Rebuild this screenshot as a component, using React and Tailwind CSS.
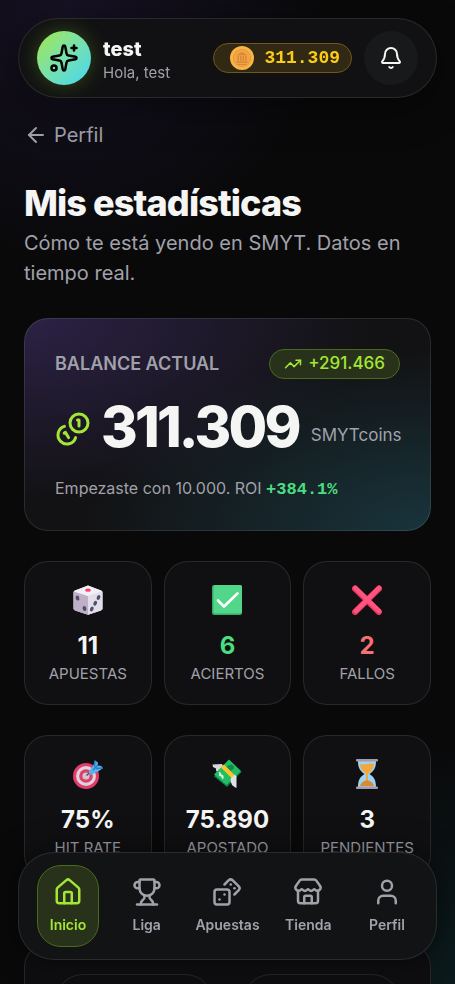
import { ArrowLeft, Bell, Dices, House, Sparkles, Store, TrendingUp, Trophy, User } from 'lucide-react'
import clsx from 'clsx'

const NAV_ITEMS = [
  { id: 'inicio', label: 'Inicio', icon: House, active: true },
  { id: 'liga', label: 'Liga', icon: Trophy },
  { id: 'apuestas', label: 'Apuestas', icon: Dices },
  { id: 'tienda', label: 'Tienda', icon: Store },
  { id: 'perfil', label: 'Perfil', icon: User },
]

const RESULT_STATS = [
  { label: 'Apuestas', value: '11', icon: DieEmoji },
  { label: 'Aciertos', value: '6', icon: CheckEmoji, color: 'text-[#4ade80]' },
  { label: 'Fallos', value: '2', icon: CrossEmoji, color: 'text-[#f87171]' },
]

const VOLUME_STATS = [
  { label: 'Hit rate', value: '75%', icon: TargetEmoji },
  { label: 'Apostado', value: '75.890', icon: MoneyEmoji },
  { label: 'Pendientes', value: '3', icon: HourglassEmoji },
]

export default function App() {
  return (
    <div className="relative h-screen overflow-hidden bg-[#09090a] font-['Inter',sans-serif] text-[#f5f5f4]">
      {/* Ambient glow */}
      <div className="pointer-events-none absolute inset-0 bg-[radial-gradient(circle_at_15%_0%,rgba(90,60,170,0.16),transparent_260px),radial-gradient(circle_at_108%_100%,rgba(20,110,115,0.2),transparent_240px)]" />

      <div className="relative flex h-full flex-col overflow-y-auto px-6 pt-[18px] [scrollbar-width:none]">
        <Header />
        <main className="flex flex-col gap-[30px] pt-[23px] pb-40">
          <div>
            <a href="#perfil" className="inline-flex items-center gap-[6px] text-xl leading-7 text-[#a1a1aa]">
              <ArrowLeft size={24} strokeWidth={2} />
              Perfil
            </a>
            <h1 className="mt-[30px] text-4xl leading-10 font-extrabold tracking-tight">Mis estadísticas</h1>
            <p className="mt-[5px] text-xl leading-[30px] text-[#a1a1aa]">
              Cómo te está yendo en SMYT. Datos en tiempo real.
            </p>
          </div>
          <BalanceCard />
          <StatRow stats={RESULT_STATS} />
          <StatRow stats={VOLUME_STATS} />
          <section className="mt-[34px] grid grid-cols-2 gap-[30px] rounded-[24px] border border-white/10 bg-[#0e0e10] p-[30px]">
            <div className="h-36 rounded-[28px] border border-white/10" />
            <div className="h-36 rounded-[28px] border border-white/10" />
          </section>
        </main>
      </div>

      <BottomNav />
    </div>
  )
}

function Header() {
  return (
    <header className="sticky top-0 z-20 -mx-[6px] flex h-20 shrink-0 items-center gap-3 rounded-[40px] border border-white/10 bg-[#111113] px-[18px] shadow-[0_10px_40px_rgba(0,0,0,0.4)]">
      <div className="flex size-[54px] shrink-0 items-center justify-center rounded-full bg-linear-to-br from-[#a3e635] to-[#3fd6f5] text-black shadow-[0_0_20px_rgba(132,204,22,0.3)]">
        <Sparkles size={30} strokeWidth={2} />
      </div>
      <div className="min-w-0 flex-1 pt-[6px]">
        <p className="text-xl leading-6 font-extrabold">test</p>
        <p className="text-[15px] leading-6 text-[#a1a1aa]">Hola, test</p>
      </div>
      <div className="flex h-[30px] items-center gap-[10px] rounded-full border border-[#725818] bg-[#312914] pr-[11px] pl-4 text-[#facc15]">
        <CoinEmoji />
        <span className="font-['Liberation_Mono',monospace] text-lg font-bold">311.309</span>
      </div>
      <button type="button" aria-label="Notificaciones" className="flex size-[54px] items-center justify-center rounded-full bg-[#18191b]">
        <Bell size={24} strokeWidth={2} />
      </button>
    </header>
  )
}

function BalanceCard() {
  return (
    <section className="rounded-[24px] border border-white/10 bg-[#121214] bg-[radial-gradient(ellipse_at_0%_0%,rgba(76,52,130,0.45),transparent_60%),radial-gradient(ellipse_at_100%_100%,rgba(34,100,115,0.42),transparent_60%)] bg-origin-border p-[30px]">
      <div className="flex items-center justify-between">
        <h2 className="text-lg leading-7 font-semibold text-[#a1a1aa] uppercase">Balance actual</h2>
        <span className="flex h-[30px] items-center gap-[6px] rounded-full border border-[#4a6a1d] bg-[#28321a] px-[14px] text-[17px] font-medium text-[#a3e635]">
          <TrendingUp size={18} strokeWidth={2} />
          +291.466
        </span>
      </div>
      <div className="mt-[18px] flex items-center gap-[10px]">
        <CoinsIcon />
        <p className="flex items-end gap-3">
          <span className="text-[56px] leading-[60px] font-extrabold tracking-tighter">311.309</span>
          <span className="pb-2 text-[17px] leading-7 text-[#a1a1aa]">SMYTcoins</span>
        </p>
      </div>
      <p className="mt-[19px] text-base leading-6 text-[#a1a1aa]">
        Empezaste con 10.000. ROI{' '}
        <strong className="font-['Liberation_Mono',monospace] text-[17px] leading-none text-[#4ade80]">+384.1%</strong>
      </p>
    </section>
  )
}

function StatRow({ stats }) {
  return (
    <section className="grid grid-cols-3 gap-3">
      {stats.map(({ label, value, icon: Icon, color }) => (
        <div key={label} className="flex h-36 flex-col items-center rounded-[24px] border border-white/10 bg-[#101012] pt-[23px]">
          <Icon />
          <p className={clsx('mt-[15px] text-2xl leading-8 font-bold', color)}>{value}</p>
          <p className="text-[15px] leading-6 text-[#a1a1aa] uppercase">{label}</p>
        </div>
      ))}
    </section>
  )
}

function BottomNav() {
  return (
    <nav className="absolute inset-x-[18px] bottom-6 z-20 flex h-[108px] justify-between rounded-[36px] border border-white/10 bg-[#121315] px-[18px] py-3 shadow-[0_0_30px_rgba(0,0,0,0.5)]">
      {NAV_ITEMS.map(({ id, label, icon: Icon, active }) => (
        <a
          key={id}
          href={`#${id}`}
          className={clsx(
            'flex min-w-[62px] flex-col items-center gap-[6px] rounded-[24px] border pt-[11px] text-sm leading-6 font-semibold',
            active ? 'border-[#4a6a1d] bg-[#28321a] text-[#a3e635]' : 'border-transparent text-[#a1a1aa]'
          )}
        >
          <Icon size={30} strokeWidth={2} className="shrink-0" />
          {label}
        </a>
      ))}
    </nav>
  )
}

function CoinsIcon() {
  return (
    <svg
      width="36"
      height="36"
      viewBox="0 0 24 24"
      fill="none"
      stroke="currentColor"
      strokeWidth="2"
      strokeLinecap="round"
      strokeLinejoin="round"
      className="mt-1 shrink-0 text-[#a3e635]"
      aria-hidden="true"
    >
      <path d="M13.744 17.736a6 6 0 1 1-7.48-7.48" />
      <path d="M15 6h1v4" />
      <path d="m6.134 14.768.866-.5 2 3.464" />
      <circle cx="16" cy="8" r="6" />
    </svg>
  )
}

/* Colour icons */

function CoinEmoji() {
  return (
    <svg width="24" height="24" viewBox="0 0 24 24" aria-hidden="true">
      <circle cx="12" cy="12" r="12" fill="#f9b546" />
      <circle cx="12" cy="12" r="9" fill="#e08e3a" />
      <circle cx="12" cy="12" r="8.4" fill="#f2a544" />
      <path d="M6.5 9.2 12 6l5.5 3.2ZM7.5 10H9v5H7.5zM10 10h1.4v5H10zM12.600 10H14v5h-1.400zM15 10h1.500v5H15z" fill="#d98736" />
      <path d="M6.500 15.500h11v1.500h-11zM8 18h8v1H8z" fill="#d98736" />
    </svg>
  )
}

function DieEmoji() {
  return (
    <svg width="30" height="30" viewBox="0 0 30 30" aria-hidden="true">
      <path d="M15 .5 28.500 5.500 29.500 7v17L28 25.500 15 29.800 2 25.500.5 24V7L1.500 5.500Z" fill="#e6e0ec" />
      <path d="M.5 6.500 15 11v18.800L2 25.500.5 24Z" fill="#bfb0c8" />
      <path d="M29.500 6.500 15 11v18.800L28 25.500l1.500-1.500Z" fill="#e3dde9" />
      <path d="M15 .5 29 6.200 15 11 1 6.200Z" fill="#f3eff6" />
      <ellipse cx="15" cy="5.200" rx="2.900" ry="1.600" fill="#f8406a" />
      <g fill="#49506b">
        <ellipse cx="4.500" cy="13" rx="1.800" ry="2.600" transform="rotate(-14 4.500 13)" />
        <ellipse cx="11.500" cy="23.500" rx="1.800" ry="2.600" transform="rotate(-14 11.500 23.500)" />
        <ellipse cx="25.500" cy="12.500" rx="1.700" ry="2.500" transform="rotate(25 25.500 12.500)" />
        <ellipse cx="22.200" cy="18.300" rx="1.700" ry="2.500" transform="rotate(25 22.200 18.300)" />
        <ellipse cx="18.800" cy="24" rx="1.700" ry="2.500" transform="rotate(25 18.800 24)" />
      </g>
    </svg>
  )
}

function CheckEmoji() {
  return (
    <svg width="30" height="30" viewBox="0 0 30 30" aria-hidden="true">
      <rect width="30" height="30" rx="2" fill="#3aa86b" />
      <rect x="1.500" width="28.500" height="28.500" rx="2" fill="#52d689" />
      <path d="m6 15.500 6 6L25.500 8.500" fill="none" stroke="#fff" strokeWidth="2.600" strokeLinecap="round" strokeLinejoin="round" />
    </svg>
  )
}

function CrossEmoji() {
  return (
    <svg width="30" height="30" viewBox="0 0 30 30" strokeLinecap="round" aria-hidden="true">
      <path d="m3 3.500 24 23.500M27 3.500 3 27" stroke="#e8395f" strokeWidth="6" />
      <path d="m3.500 3 23.500 23M27 3 4 26" stroke="#ff5480" strokeWidth="4.500" />
    </svg>
  )
}

function TargetEmoji() {
  return (
    <svg width="30" height="30" viewBox="0 0 30 30" aria-hidden="true">
      <circle cx="13" cy="17" r="13" fill="#e23c68" />
      <circle cx="13" cy="17" r="10" fill="#dcd3df" />
      <circle cx="13" cy="17" r="6.800" fill="#e23c68" />
      <circle cx="13" cy="17" r="3.600" fill="#cfc6d4" />
      <path d="m13.500 16.500 5-4.500" stroke="#5b5866" strokeWidth="1.600" />
      <path d="m15.500 13 5-7L22 1.500l3 2-.5 3 4 .5 1 2.500-4.500 3-7.500 3.500Z" fill="#55b4ee" />
      <path d="m20 11 5-5M22 1.500 21.500 8M30 9l-7 .5" stroke="#2380c4" strokeWidth="1.300" />
    </svg>
  )
}

function MoneyEmoji() {
  return (
    <svg width="30" height="30" viewBox="0 0 30 30" aria-hidden="true">
      <path d="M.5 5.500 10 5l2 4-6 5-2-2.500V9.500L1 8Z" fill="#d9d5de" />
      <path d="m2 17.500 15-16.500L29.500 13 15 28Z" fill="#147a45" />
      <path d="m2 15.500 15-15 12 11.500L14.500 26Z" fill="#24bd64" />
      <ellipse cx="18" cy="9" rx="4" ry="3" fill="#138a4c" transform="rotate(-30 18 9)" />
      <path d="M8.500 13.500c-2 1.500-1 3.500.5 3s3 .5 1.500 3M7.500 13l3.500 7" fill="none" stroke="#d4f5e0" strokeWidth="1.200" />
      <path d="m9 8.500 3-3L22.500 16l-3 3Z" fill="#fcc527" />
      <path d="m19 19 4-3.500 1.500 2V29l-2-1-2.500-2-1.500-4Z" fill="#e4e0e8" />
    </svg>
  )
}

function HourglassEmoji() {
  return (
    <svg width="30" height="30" viewBox="0 0 30 30" aria-hidden="true">
      <path d="M6 2h18c0 7-2 10-6.500 13C22 18 24 21 24 28H6c0-7 2-10 6.500-13C8 12 6 9 6 2Z" fill="#9bd3f5" />
      <path d="M8 5c5 1.500 10-1.500 14 0 0 4-2 7-6 9.500v9l6 3.500H8l6-3.500v-9C10 12 8 9 8 5Z" fill="#f2a63c" />
      <path d="M8 27c1-4 4-5 7-6 3 1 6 2 7 6Z" fill="#d98a35" />
      <rect x="4" width="22" height="2.500" rx="1" fill="#a79ba8" />
      <rect x="4" y="27.500" width="22" height="2.500" rx="1" fill="#a79ba8" />
    </svg>
  )
}
